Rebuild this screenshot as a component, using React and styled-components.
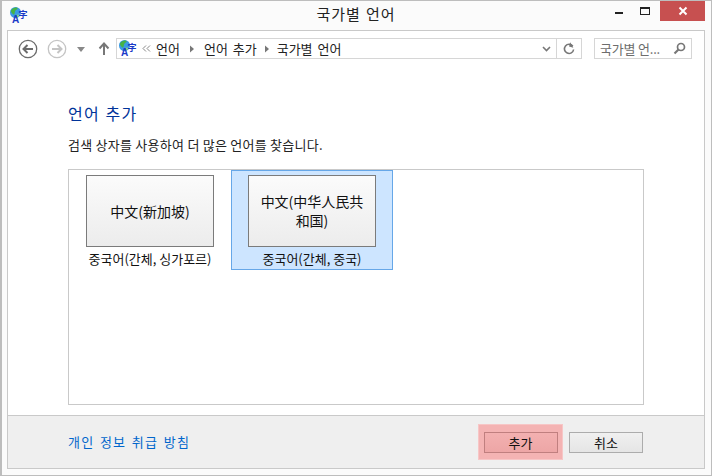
import React from "react";
import styled, { createGlobalStyle } from "styled-components";

const Global = createGlobalStyle`
  html, body { margin: 0; padding: 0; background: #fff; }
  * { box-sizing: border-box; }
  body { font-family: "Noto Sans CJK KR", "Noto Sans", sans-serif; font-size: 12px; color: #111; }
`;

const Window = styled.div`
  width: 712px; height: 476px; background: #fbfbfb;
  border: 2px solid #bdbdbd; border-top-width: 1px; border-bottom-width: 1px; border-right-width: 1px;
  display: flex; flex-direction: column; padding: 0 6px 6px 5px;
`;
const TitleBar = styled.div`
  height: 29px; flex: none; display: flex; align-items: flex-start; position: relative; margin-right: -6px;
`;
const AppIconSlot = styled.div`
  padding: 6px 0 0 3px; width: 30px;
`;
const Title = styled.div`
  position: absolute; left: 0; right: 0; top: 2px; text-align: center; font-size: 15px; line-height: 22px; color: #222; padding-right: 6px; letter-spacing: 0.9px; word-spacing: 1px;
`;
const WinControls = styled.div`
  margin-left: auto; display: flex; align-items: flex-start; margin-right: 6px;
`;
const WinBtn = styled.div`
  width: 26px; height: 19px; margin-right: ${p => p.$mr || 0}px; display: flex; align-items: center; justify-content: center;
`;
const CloseBtn = styled.div`
  width: 45px; height: 20px; background: #c75050; display: flex; align-items: center; justify-content: center;
`;
const Client = styled.div`
  flex: 1; background: #fff; border: 1px solid #c9c9c9; display: flex; flex-direction: column; min-height: 0;
`;
const NavBar = styled.div`
  height: 28px; margin-top: 4px; flex: none; display: flex; align-items: center; padding-left: 10px;
`;
const NavButtons = styled.div`
  display: flex; align-items: center; width: 98px; flex: none;
`;
const NavGap = styled.span`
  width: ${p => p.$w}px; flex: none;
`;
const AddressBox = styled.div`
  width: 466px; height: 21px; border: 1px solid #d6d6d6; display: flex; align-items: center; flex: none;
  margin-top: -1px;
`;
const Crumbs = styled.div`
  flex: 1; display: flex; align-items: center; font-size: 13px; color: #222; padding-left: 2px; white-space: nowrap; word-spacing: 2px;
`;
const CrumbSep = styled.span`
  width: ${p => p.$w}px; display: inline-flex; justify-content: center; color: #777;
`;
const ChevronSlot = styled.div`
  width: 26px; height: 100%; display: flex; align-items: center; justify-content: center; padding-left: 6px;
`;
const Refresh = styled.div`
  width: 25px; height: 100%; border-left: 1px solid #d6d6d6; display: flex; align-items: center; justify-content: center;
`;
const SearchBox = styled.div`
  width: 98px; height: 21px; margin-left: 12px; margin-top: -1px; border: 1px solid #d6d6d6; display: flex; align-items: center;
  justify-content: space-between; padding: 0 5px; color: #6d6d6d; font-size: 13px; letter-spacing: -0.2px; flex: none; white-space: nowrap;
`;
const Body = styled.div`
  flex: 1; padding: 38px 60px 10px 60px; display: flex; flex-direction: column; min-height: 0;
`;
const Heading = styled.h1`
  margin: 0; font-size: 16px; letter-spacing: 1.2px; word-spacing: 1px; font-weight: 400; line-height: 24px; color: #003399;
`;
const Description = styled.p`
  margin: 11px 0 0; font-size: 13px; letter-spacing: 0.25px; line-height: 18px; color: #222;
`;
const ListBox = styled.div`
  margin-top: 15px; width: 576px; height: 236px; border: 1px solid #c9c9c9; display: flex; align-items: flex-start;
`;
const Item = styled.div`
  width: 162px; height: 100px; border: 1px solid ${p => p.$selected ? "#66a7e8" : "transparent"};
  background: ${p => p.$selected ? "#cde5ff" : "transparent"};
  display: flex; flex-direction: column; align-items: center; padding-top: 4px;
`;
const Tile = styled.div`
  width: 128px; height: 72px; border: 1px solid #7b7b7b; background: linear-gradient(#fbfbfb, #ececec);
  display: flex; align-items: center; justify-content: center; text-align: center;
  font-size: 14px; line-height: 19px; color: #111; padding: 0 10px;
`;
const ItemLabel = styled.div`
  margin-top: 3px; font-size: 13px; line-height: 18px; color: #111; white-space: nowrap;
`;
const Footer = styled.div`
  height: 53px; flex: none; background: #efefef; border-top: 1px solid #c9c9c9; display: flex; align-items: center; padding: 0 61px 0 60px;
`;
const PrivacyLink = styled.a`
  font-size: 13px; letter-spacing: 1.2px; word-spacing: 1.5px; color: #0066cc; margin-top: -1px;
`;
const Buttons = styled.div`
  margin-left: auto; display: flex; align-items: center; gap: 12px;
`;
const Highlight = styled.div`
  margin: -5px -6px -5px -5px; background: #f4b3b3; border: 1px solid #f7c6c6;
  height: 36px; width: 85px; display: flex; align-items: center; justify-content: center;
`;
const Button = styled.div`
  width: 74px; height: 21px; border: 1px solid ${p => p.$hl ? "#c07f7f" : "#acacac"};
  background: ${p => p.$hl ? "linear-gradient(#f3b0b0, #eda6a6)" : "linear-gradient(#f0f0f0, #e5e5e5)"};
  display: flex; align-items: center; justify-content: center; font-size: 13px; color: #111;
`;

const LangIcon = () => (
  <svg width="18" height="17" viewBox="0 0 18 17" style={{ flex: "none" }}>
    <circle cx="5.5" cy="5.5" r="5.5" fill="#3a9ae2" />
    <path d="M1 3.5C2.5 .8 6 0 7.5 1c.7 1-1 1.5-2 2.5S5 7.5 4 7.5 .6 5 1 3.5z" fill="#45b345" />
    <path d="M6 8c1-.5 2.5-.5 3 0s-.5 2-2 2.5S5.5 9 6 8z" fill="#8fd07c" />
    <text x="2" y="16.3" fontSize="10" fontWeight="700" fontFamily="Liberation Sans, sans-serif" fill="#1a3ac8">A</text>
    <text x="8.6" y="10.6" fontSize="9" fontWeight="700" fontFamily="Noto Sans CJK SC, sans-serif" fill="#1a3ac8">字</text>
  </svg>
);

const CircleNav = ({ dir, color }) => (
  <svg width="20" height="20" viewBox="0 0 20 20">
    <circle cx="10" cy="10" r="8.7" fill="none" stroke={color} strokeWidth="1.3" />
    {dir === "l"
      ? <path d="M15 10H6M9.5 6 5.5 10l4 4" fill="none" stroke={color} strokeWidth="2" />
      : <path d="M5 10h9M10.5 6l4 4-4 4" fill="none" stroke={color} strokeWidth="2" />}
  </svg>
);

const SmallTri = () => (
  <svg width="8" height="8" viewBox="0 0 8 8"><path d="M2 0.5 6 4 2 7.5z" fill="#777" /></svg>
);

export default function App() {
  return (
    <>
      <Global />
      <Window>
        <TitleBar>
          <AppIconSlot><LangIcon /></AppIconSlot>
          <Title>국가별 언어</Title>
          <WinControls>
            <WinBtn>
              <svg width="10" height="10" viewBox="0 0 10 10"><rect x="1" y="6" width="8" height="2" fill="#222" /></svg>
            </WinBtn>
            <WinBtn $mr={2}>
              <svg width="12" height="10" viewBox="0 0 12 10"><rect x="1.5" y="1.5" width="9" height="7" fill="none" stroke="#222" /><rect x="1" y="1" width="10" height="2" fill="#222" /></svg>
            </WinBtn>
            <CloseBtn>
              <svg width="10" height="10" viewBox="0 0 10 10"><path d="M1.5 1.5 8.5 8.5M8.5 1.5 1.5 8.5" stroke="#fff" strokeWidth="2" /></svg>
            </CloseBtn>
          </WinControls>
        </TitleBar>
        <Client>
          <NavBar>
            <NavButtons>
              <CircleNav dir="l" color="#6b6b6b" />
              <NavGap $w={9} />
              <CircleNav dir="r" color="#c4c4c4" />
              <NavGap $w={10} />
              <svg width="8" height="5" viewBox="0 0 8 5"><path d="M0 0h8L4 5z" fill="#888" /></svg>
              <NavGap $w={13} />
              <svg width="12" height="14" viewBox="0 0 12 14"><path d="M6 13V2M1.5 6.5 6 1.5l4.5 5" fill="none" stroke="#777" strokeWidth="2" /></svg>
            </NavButtons>
            <AddressBox>
              <Crumbs>
                <LangIcon />
                <CrumbSep $w={19}>
                  <svg width="9" height="7" viewBox="0 0 9 7"><path d="M4 .5 1 3.5l3 3M8 .5l-3 3 3 3" fill="none" stroke="#888" /></svg>
                </CrumbSep>
                언어
                <CrumbSep $w={24}><SmallTri /></CrumbSep>
                언어 추가
                <CrumbSep $w={20}><SmallTri /></CrumbSep>
                국가별 언어
              </Crumbs>
              <ChevronSlot>
                <svg width="9" height="6" viewBox="0 0 9 6"><path d="M1 1l3.5 3.5L8 1" fill="none" stroke="#777" strokeWidth="1.6" /></svg>
              </ChevronSlot>
              <Refresh>
                <svg width="12" height="13" viewBox="0 0 12 13"><path d="M9.8 4.2A4.6 4.6 0 1 0 10.6 7.5" fill="none" stroke="#777" strokeWidth="1.6" /><path d="M6.5 0.5v4.5h4.5z" fill="#777" transform="rotate(15 8 3)" /></svg>
              </Refresh>
            </AddressBox>
            <SearchBox>
              국가별 언...
              <svg width="13" height="13" viewBox="0 0 13 13"><circle cx="8" cy="5" r="3.5" fill="none" stroke="#777" strokeWidth="1.7" /><path d="M5.5 7.5 1.5 11.5" stroke="#777" strokeWidth="2.2" /></svg>
            </SearchBox>
          </NavBar>
          <Body>
            <Heading>언어 추가</Heading>
            <Description>검색 상자를 사용하여 더 많은 언어를 찾습니다.</Description>
            <ListBox>
              <Item>
                <Tile>中文(新加坡)</Tile>
                <ItemLabel>중국어(간체, 싱가포르)</ItemLabel>
              </Item>
              <Item $selected>
                <Tile>中文(中华人民共和国)</Tile>
                <ItemLabel>중국어(간체, 중국)</ItemLabel>
              </Item>
            </ListBox>
          </Body>
          <Footer>
            <PrivacyLink>개인 정보 취급 방침</PrivacyLink>
            <Buttons>
              <Highlight><Button $hl>추가</Button></Highlight>
              <Button>취소</Button>
            </Buttons>
          </Footer>
        </Client>
      </Window>
    </>
  );
}
